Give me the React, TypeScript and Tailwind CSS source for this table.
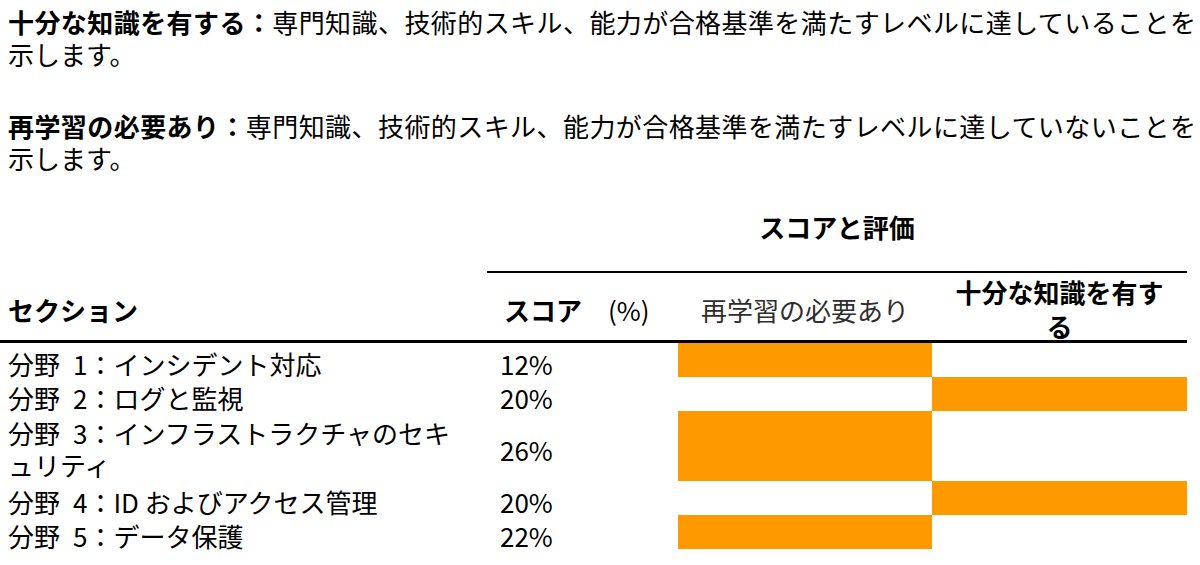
import React from "react";

interface IRow {
    name: React.ReactNode;
    score: string;
    pass: boolean;
    tall?: boolean;
}

const rows: IRow[] = [
    { name: "分野\u20021：インシデント対応", score: "12%", pass: false },
    { name: "分野\u20022：ログと監視", score: "20%", pass: true },
    {
        name: (
            <>
                分野{"\u2002"}3：インフラストラクチャのセキ
                <br />
                ュリティ
            </>
        ),
        score: "26%",
        pass: false,
        tall: true,
    },
    { name: "分野\u20024：ID およびアクセス管理", score: "20%", pass: true },
    { name: "分野\u20025：データ保護", score: "22%", pass: false },
];

const App: React.FunctionComponent = () => {
    return (
        <div
            className="w-[1200px] h-[565px] overflow-hidden bg-white text-black text-[26px] leading-[32px]"
            style={{ fontFamily: '"Noto Sans CJK JP", "Noto Sans", sans-serif' }}
        >
            {/* legend */}
            <div className="pl-2 pr-1 pt-[6px]">
                <p className="text-justify">
                    <span className="font-bold">十分な知識を有する：</span>
                    専門知識、技術的スキル、能力が合格基準を満たすレベルに達していることを示します。
                </p>
                <p className="mt-[40px] text-justify">
                    <span className="font-bold">再学習の必要あり：</span>
                    専門知識、技術的スキル、能力が合格基準を満たすレベルに達していないことを示します。
                </p>
            </div>

            {/* table */}
            <div className="mt-[37px] w-[1187px] grid grid-cols-[487px_191px_254px_255px]">
                <div />
                <div className="col-span-3 pb-[28px] text-center font-bold border-b-2 border-black">
                    スコアと評価
                </div>

                <div className="h-[70px] pl-2 pt-[6px] flex items-center font-bold border-b-[3px] border-black">
                    セクション
                </div>
                <div className="h-[70px] pl-[17px] pt-[6px] flex items-center border-b-[3px] border-black">
                    <span className="font-bold">スコア</span>
                    <span className="ml-[26px]">(%)</span>
                </div>
                <div className="h-[70px] pt-[6px] flex items-center justify-center text-[#2e2e2e] border-b-[3px] border-black">
                    再学習の必要あり
                </div>
                <div className="h-[70px] pt-[5px] flex items-center justify-center text-center font-bold leading-[34px] border-b-[3px] border-black">
                    十分な知識を有す<br />る
                </div>

                {rows.map((r, i) => (
                    <React.Fragment key={i}>
                        <div
                            className={`${
                                r.tall ? "h-[70px] pt-[6px] leading-[32px]" : "h-[34px] pt-[8px] leading-[26px]"
                            } pl-2 flex items-center`}
                        >
                            <span>{r.name}</span>
                        </div>
                        <div className="pl-[13px] pt-[8px] leading-[26px] flex items-center">{r.score}</div>
                        <div className={r.pass ? "" : "bg-[#ff9900]"} />
                        <div className={r.pass ? "bg-[#ff9900]" : ""} />
                    </React.Fragment>
                ))}
            </div>
        </div>
    );
};

export default App;
